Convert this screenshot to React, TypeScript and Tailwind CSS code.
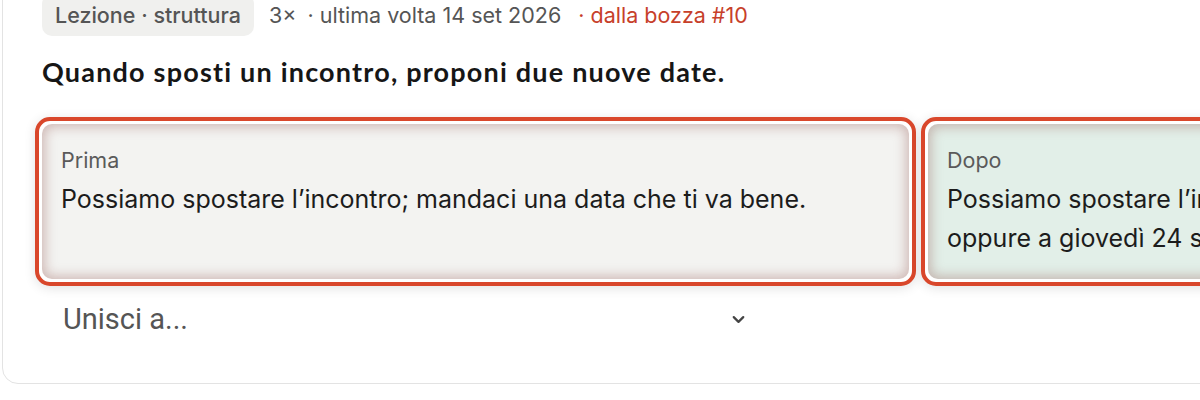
import { ChevronDown } from "lucide-react";

const body = { fontFamily: "Inter, 'Noto Sans', sans-serif" };

function VersionBox({ label, text, tone }: { label: string; text: string; tone: "before" | "after" }) {
  return (
    <div className="w-[881px] shrink-0 rounded-[15px] border-[4px] border-[#d9472b] bg-white p-[3px] shadow-[0_2px_12px_rgba(0,0,0,0.12)]">
      <div
        className={`h-full rounded-[10px] pl-[19px] pr-[24px] pt-[22px] pb-[21px] shadow-[inset_0_0_12px_3px_rgba(150,90,85,0.38)] ${
          tone === "before" ? "bg-[#f3f3f1]" : "bg-[#e2efe8]"
        }`}
      >
        <div className="text-[21.5px] leading-[28px] text-[#5a5a5a]">{label}</div>
        <p className="mt-[6px] text-[25px] leading-[39px] text-[#1c1c1c]">{text}</p>
      </div>
    </div>
  );
}

export default function App() {
  return (
    <div className="h-[400px] w-[1200px] overflow-hidden bg-white" style={body}>
      <div className="ml-[2px] mt-[-47px] w-[1400px] rounded-[16px] border border-[#e3e3e3] bg-white pl-[39px] pt-[40px] pb-[47px]">
        <div className="flex items-center text-[21.5px] leading-[28px] text-[#555]">
          <span className="rounded-[10px] bg-[#f0f0ee] px-[13px] py-[7px] font-medium">Lezione · struttura</span>
          <span className="ml-[15px]">3×</span>
          <span className="ml-[11px]">· ultima volta 14 set 2026</span>
          <span className="ml-[17px] text-[#c7402a]">· dalla bozza #10</span>
        </div>

        <h2
          className="mt-[19px] text-[27px] font-bold leading-[34px] tracking-[1.2px] text-[#161616]"
          style={{ fontFamily: "Lato, 'Noto Sans', sans-serif" }}
        >
          Quando sposti un incontro, proponi due nuove date.
        </h2>

        <div className="ml-[-7px] mt-[28px] flex gap-[5px]">
          <VersionBox tone="before" label="Prima" text="Possiamo spostare l’incontro; mandaci una data che ti va bene." />
          <VersionBox
            tone="after"
            label="Dopo"
            text="Possiamo spostare l’incontro a martedì 22 settembre alle 10:00 oppure a giovedì 24 settembre alle 15:00."
          />
        </div>

        <div className="mt-[16px] flex w-[718px] items-center justify-between pl-[21px] pr-[12px]">
          <span className="text-[29px] leading-[34px] text-[#555]" style={{ fontFamily: "Roboto, sans-serif" }}>
            Unisci a...
          </span>
          <ChevronDown className="h-[19px] w-[19px] text-[#444]" strokeWidth={2.8} />
        </div>
      </div>
    </div>
  );
}
